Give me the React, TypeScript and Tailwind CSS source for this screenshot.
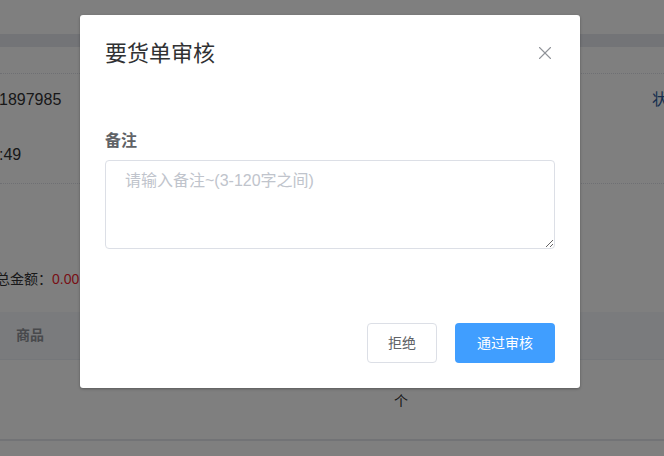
import { X } from "lucide-react";

const font = { fontFamily: '"Liberation Sans", "Noto Sans CJK SC", sans-serif' };

function PageBehind() {
  return (
    <div className="flex flex-col w-full h-full bg-white text-[#303133]">
      <div className="h-[34px] bg-white" />
      <div className="h-[13px] bg-[#e6e8ee]" />
      <div className="h-[27px] border-b border-dotted border-[#dcdfe6]" />
      <div className="relative h-[110px] border-b border-dotted border-[#dcdfe6]">
        <div className="absolute left-[-1px] top-[16px] text-[16px] leading-[20px]">1897985</div>
        <div className="absolute left-[-1px] top-[71px] text-[16px] leading-[20px]">:49</div>
        <div className="absolute left-[652px] top-[16px] text-[16px] leading-[20px] text-[#2f5d9e] whitespace-nowrap">状态</div>
      </div>
      <div className="h-[85px]" />
      <div className="h-[20px] flex items-center text-[14px] ml-[-4px] whitespace-nowrap">
        <span>总金额：</span>
        <span className="text-[#f01d2d]">0.00</span>
      </div>
      <div className="h-[23px]" />
      <div className="h-[48px] bg-[#f5f7fa] flex items-center px-[16px] text-[14px] font-bold text-[#909399] border-b border-[#ebeef5]">
        商品
      </div>
      <div className="h-[81px] flex items-center border-b-2 border-[#e4e6ec] text-[14px]">
        <span className="ml-[394px] mt-[3px]">个</span>
      </div>
      <div className="flex-1 bg-white" />
    </div>
  );
}

export default function App() {
  return (
    <div className="relative w-[664px] h-[456px] overflow-hidden" style={font}>
      <PageBehind />
      <div className="absolute inset-0 bg-black/50" />
      <div className="absolute left-[80px] top-[15px] w-[500px] h-[373px] bg-white rounded-[3px] shadow-[0_1px_3px_rgba(0,0,0,0.3)] flex flex-col px-[25px] pt-[24px] pb-[25px]">
        <div className="flex items-start justify-between">
          <h2 className="text-[22px] leading-[30px] text-[#303133]">要货单审核</h2>
          <button className="mt-[3px] mr-[-1px] text-[#909399]">
            <X size={22} strokeWidth={1.2} />
          </button>
        </div>
        <label className="mt-[61px] text-[16px] leading-[22px] font-bold text-[#606266]">备注</label>
        <textarea
          placeholder="请输入备注~(3-120字之间)"
          className="mt-[8px] h-[89px] w-full border border-[#dcdfe6] rounded-[4px] pl-[19px] pr-[15px] pt-[8px] text-[16px] leading-[24px] text-[#606266] placeholder:text-[#c0c4cc] outline-none"
          style={font}
        />
        <div className="mt-auto flex justify-end gap-[18px]">
          <button className="w-[70px] h-[40px] border border-[#dcdfe6] rounded-[4px] text-[14px] text-[#606266] bg-white">
            拒绝
          </button>
          <button className="w-[100px] h-[40px] rounded-[4px] text-[14px] text-white bg-[#409eff]">
            通过审核
          </button>
        </div>
      </div>
    </div>
  );
}
